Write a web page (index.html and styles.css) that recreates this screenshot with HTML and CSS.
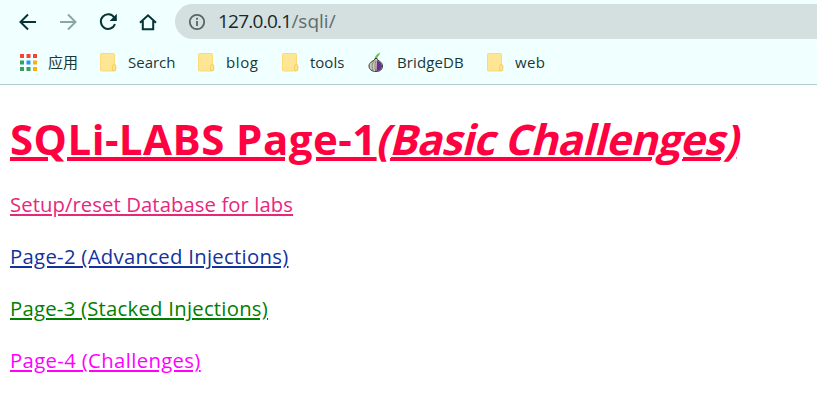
FILE: index.html
```html
<!DOCTYPE html>
<html lang="zh-CN">
<head>
<meta charset="utf-8">
<title>SQLi-LABS</title>
<link rel="stylesheet" href="styles.css">
</head>
<body>
<svg class="defs" width="0" height="0" aria-hidden="true">
  <symbol id="folder" viewBox="0 0 17 19">
    <path d="M1.5.5h12q1 0 1 1V12q1.200.3 1.200 1.600v2.900q0 1.500-1.700 1.500H1.500q-1 0-1-1V1.500q0-1 1-1z" fill="#ffe694" stroke="#fad976"/>
    <path d="M12.700 17.500v-4.500q0-1.500 1.500-1.500t1.500 1.500v3q0 1.500-1.500 1.500z" fill="#ffe694" stroke="#f2cf5a"/>
  </symbol>
</svg>
<header class="chrome">
  <nav class="toolbar">
    <svg class="nav-icon" viewBox="0 0 20 20"><path d="M18 10H3.500M10 2.500 2.500 10l7.500 7.500"/></svg>
    <svg class="nav-icon disabled" viewBox="0 0 20 20"><path d="M2 10h14.500M10 2.500l7.500 7.500-7.500 7.500"/></svg>
    <svg class="nav-icon" viewBox="0 0 20 20"><path d="M16.200 5.500A7.300 7.300 0 1 0 17 12.200"/><path class="solid" d="M18.800 1.800v7.200h-7.200z"/></svg>
    <svg class="nav-icon home" viewBox="0 0 20 20"><path d="M2 10.700 10 3.300l8 7.400M4.800 9v8.200h10.400V9"/></svg>
    <div class="address">
      <svg class="info" viewBox="0 0 18 18"><circle cx="9" cy="9" r="7.200"/><path d="M9 8v5M9 4.700v2"/></svg>
      <span class="url"><span class="host">127.0.0.1</span><span class="path">/sqli/</span></span>
    </div>
  </nav>
  <nav class="bookmarks">
    <a class="mark apps"><svg class="grid" viewBox="0 0 17 17">
      <path fill="#f44336" d="M0 0h4v4H0zM6.500 0h4v4h-4zM13 0h4v4h-4z"/>
      <path fill="#34a05a" d="M0 6.500h4v4H0zM0 13h4v4H0zM6.500 13h4v4h-4z"/>
      <path fill="#2196f3" d="M6.500 6.500h4v4h-4z"/>
      <path fill="#fcaf08" d="M13 6.500h4v4h-4zM13 13h4v4h-4z"/>
    </svg><span>应用</span></a>
    <a class="mark search"><svg class="folder"><use href="#folder"/></svg><span>Search</span></a>
    <a class="mark blog"><svg class="folder"><use href="#folder"/></svg><span>blog</span></a>
    <a class="mark tools"><svg class="folder"><use href="#folder"/></svg><span>tools</span></a>
    <a class="mark bridge"><svg class="onion" viewBox="0 0 16 20">
      <path d="M6.500 7C7 4 9 1.500 12.500.5 11.500 2 11 3 11 3.500 9.500 4.500 9 6 9 8z" fill="#63c747"/>
      <path d="M7 6.500C7 9 1 9.500 1 14c0 3.500 3 5.500 7 5.500s6.500-2 6.500-5.500c0-4.500-5-5-5.500-7.500z" fill="#c9cbb5" stroke="#3d3c3c"/>
      <path d="M9 7.500c.5 2 5 2.500 5 6.500 0 3-2.500 5-5.500 5z" fill="#67308d"/>
      <path d="M7.500 8C4.500 10.500 3 13 5 18M8 9c-1.300 3-1.300 6-.3 10" fill="none" stroke="#67665d" stroke-width=".7"/>
    </svg><span>BridgeDB</span></a>
    <a class="mark web"><svg class="folder"><use href="#folder"/></svg><span>web</span></a>
  </nav>
</header>
<main class="page">
  <h1><span class="title">SQLi-LABS Page-1</span><em>(Basic Challenges)</em></h1>
  <p><a class="setup">Setup/reset Database for labs</a></p>
  <p><a class="advanced">Page-2 (Advanced Injections)</a></p>
  <p><a class="stacked">Page-3 (Stacked Injections)</a></p>
  <p><a class="challenges">Page-4 (Challenges)</a></p>
</main>
</body>
</html>
```
FILE: styles.css
```css
* { box-sizing: border-box; }
body {
  margin: 0;
  background: #fff;
  font-family: "Open Sans", "Noto Sans CJK SC", sans-serif;
  overflow: hidden;
}
.defs { display: block; position: absolute; }
.chrome {
  height: 85px;
  background: #f0ffff;
  border-bottom: 1px solid #b3cccc;
}
.toolbar {
  display: flex;
  align-items: center;
  height: 43px;
  padding-left: 17.5px;
}
.nav-icon {
  flex: none;
  width: 20px;
  height: 20px;
  margin-right: 20px;
  fill: none;
  stroke: #063333;
  stroke-width: 2;
}
.nav-icon.home { margin-right: 17.5px; }
.nav-icon .solid { fill: #063333; stroke: none; }
.nav-icon.disabled { stroke: #8ca5a5; }
.address {
  display: flex;
  align-items: center;
  flex: 1;
  height: 35px;
  padding-left: 13px;
  border-radius: 18px 0 0 18px;
  background: #d4e0e0;
}
.info { width: 18px; height: 18px; margin-right: 12px; fill: none; stroke: #5a6363; stroke-width: 1.8; }
.url { font-size: 19px; line-height: 30px; margin-top: -2px; color: #182828; white-space: nowrap; }
.host { letter-spacing: -0.75px; }
.path { color: #5f6c6c; }
.bookmarks {
  display: flex;
  align-items: center;
  height: 38px;
  padding-left: 20px;
  font-size: 15px;
  line-height: 24px;
  color: #183838;
}
.mark { display: flex; align-items: center; flex: none; }
.grid { width: 17px; height: 17px; margin-right: 11px; }
.folder { width: 17px; height: 19px; margin-right: 11px; }
.onion { width: 16px; height: 20px; margin-right: 13px; }
.apps { width: 80px; }
.search { width: 98px; }
.blog { width: 84px; letter-spacing: 0.6px; }
.tools { width: 86px; }
.bridge { width: 119px; letter-spacing: 0.1px; }
.web { letter-spacing: 0.4px; }
.page { padding: 22px 10px 0; }
h1 {
  margin: 0;
  font-size: 42px;
  line-height: 64px;
  font-weight: 700;
  color: #ff0040;
  white-space: nowrap;
}
.title, em {
  text-decoration: underline;
  text-decoration-thickness: 4px;
  text-underline-offset: 2px;
}
.title { letter-spacing: 0.45px; }
em {
  display: inline-block;
  margin-left: -1px;
  font-style: normal;
  letter-spacing: -0.75px;
  transform: skewX(-14deg);
  transform-origin: 0 70%;
}
p { margin: 0 0 22px; font-size: 20.3px; line-height: 30px; }
h1 + p { margin-top: 18px; }
p a {
  text-decoration: underline;
  text-decoration-thickness: 2px;
  text-underline-offset: 2px;
}
.setup { color: #e6287d; letter-spacing: 0.08px; }
.advanced { color: #12329c; letter-spacing: 0.3px; }
.stacked { color: #008000; letter-spacing: 0.25px; }
.challenges { color: #ff00ff; letter-spacing: 0.36px; }
```
